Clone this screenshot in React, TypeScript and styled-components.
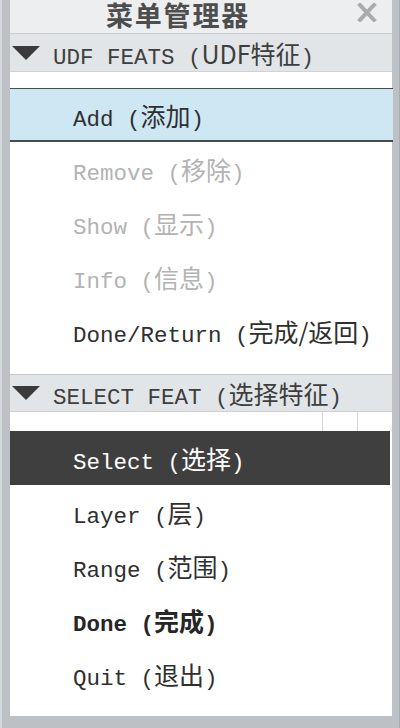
import React from "react";
import styled, { createGlobalStyle, css } from "styled-components";

const Global = createGlobalStyle`
  html, body { margin: 0; padding: 0; background: #c0c4c7; }
  * { box-sizing: border-box; }
`;

const Frame = styled.div`
  width: 400px;
  height: 728px;
  background: #bdc1c5;
  box-shadow: inset 2px 0 0 #d6d9dc, inset -1px 0 0 #a9adb1;
  padding: 0 8px 11px 10px;
  display: flex;
  flex-direction: column;
  font-family: "Liberation Mono", "Noto Sans CJK SC", monospace;
`;

const TitleBar = styled.div`
  height: 34px;
  flex: none;
  background: #eceef0;
  border-bottom: 1px solid #c9ccd0;
  display: flex;
  align-items: flex-start;
  padding: 0 15px 0 96px;
`;

const Title = styled.div`
  font-family: "Noto Sans CJK SC", sans-serif;
  font-weight: 700;
  font-size: 27px;
  line-height: 29px;
  letter-spacing: 1.8px;
  color: #4d4d4d;
`;

const Close = styled.svg`
  margin-left: auto;
  margin-top: 3px;
  width: 20px;
  height: 19px;
`;

const SectionHeader = styled.div<{ $h: number; $top?: boolean }>`
  height: ${(p) => p.$h}px;
  flex: none;
  background: #e2e5e7;
  border-bottom: 1px solid #cfd2d5;
  ${(p) => p.$top && css`border-top: 1px solid #c3c6c9;`}
  display: flex;
  align-items: center;
  padding-left: 2px;
  gap: 13px;
  color: #3e3e3e;
  font-size: 22.5px;
  white-space: nowrap;
`;

const Tri = styled.svg`
  width: 28px;
  height: 14px;
  flex: none;
`;

const List = styled.div<{ $pt: number; $pb: number }>`
  background: #ffffff;
  padding: ${(p) => p.$pt}px 0 ${(p) => p.$pb}px;
  flex: none;
  display: flex;
  flex-direction: column;
`;

const ColStrip = styled.div`
  height: 19px;
  display: flex;
  margin-top: -19px;
`;

const ColCell = styled.div<{ $w?: number }>`
  ${(p) => (p.$w ? css`width: ${p.$w}px;` : css`flex: 1;`)}
  border-left: ${(p) => (p.$w ? "1px solid #d4d6d8" : "none")};
`;

type Variant = "normal" | "disabled" | "highlight" | "selected" | "bold";

const Row = styled.div<{ $v: Variant }>`
  height: 54px;
  display: flex;
  align-items: center;
  padding-left: 63px;
  font-size: 22.5px;
  white-space: nowrap;
  color: #2f2f2f;
  ${(p) =>
    p.$v === "disabled" &&
    css`
      color: #b3b3b3;
    `}
  ${(p) =>
    p.$v === "highlight" &&
    css`
      background: #cde7f3;
      border-top: 1px solid #4b4b4b;
      border-bottom: 2px solid #4b4b4b;
      margin-right: -1px;
    `}
  ${(p) =>
    p.$v === "selected" &&
    css`
      background: #3f3f3f;
      color: #ffffff;
      margin-right: 2px;
    `}
  ${(p) =>
    p.$v === "bold" &&
    css`
      font-weight: 700;
      color: #262626;
    `}
`;

const Cn = styled.span`
  font-family: "Noto Sans CJK SC", sans-serif;
  font-size: 25px;
`;

const Label = ({ en, cn }: { en: string; cn: string }) => (
  <span>
    {en} (<Cn>{cn}</Cn>)
  </span>
);

const Triangle = () => (
  <Tri viewBox="0 0 28 14">
    <polygon points="0,0 28,0 14,14" fill="#3a3a3a" />
  </Tri>
);

export default function App() {
  return (
    <>
      <Global />
      <Frame>
        <TitleBar>
          <Title>菜单管理器</Title>
          <Close viewBox="0 0 20 19">
            <path d="M3 2 L17 17 M17 2 L3 17" stroke="#ababab" strokeWidth="4" strokeLinecap="square" />
          </Close>
        </TitleBar>
        <SectionHeader $h={38}>
          <Triangle />
          <span>
            UDF FEATS (<Cn>UDF特征</Cn>)
          </span>
        </SectionHeader>
        <List $pt={16} $pb={16}>
          <Row $v="highlight">
            <Label en="Add" cn="添加" />
          </Row>
          <Row $v="disabled">
            <Label en="Remove" cn="移除" />
          </Row>
          <Row $v="disabled">
            <Label en="Show" cn="显示" />
          </Row>
          <Row $v="disabled">
            <Label en="Info" cn="信息" />
          </Row>
          <Row $v="normal">
            <Label en="Done/Return" cn="完成/返回" />
          </Row>
        </List>
        <SectionHeader $h={38} $top>
          <Triangle />
          <span>
            SELECT FEAT (<Cn>选择特征</Cn>)
          </span>
        </SectionHeader>
        <List $pt={19} $pb={15}>
          <ColStrip>
            <ColCell />
            <ColCell $w={35} />
            <ColCell $w={35} />
          </ColStrip>
          <Row $v="selected">
            <Label en="Select" cn="选择" />
          </Row>
          <Row $v="normal">
            <Label en="Layer" cn="层" />
          </Row>
          <Row $v="normal">
            <Label en="Range" cn="范围" />
          </Row>
          <Row $v="bold">
            <Label en="Done" cn="完成" />
          </Row>
          <Row $v="normal">
            <Label en="Quit" cn="退出" />
          </Row>
        </List>
      </Frame>
    </>
  );
}
